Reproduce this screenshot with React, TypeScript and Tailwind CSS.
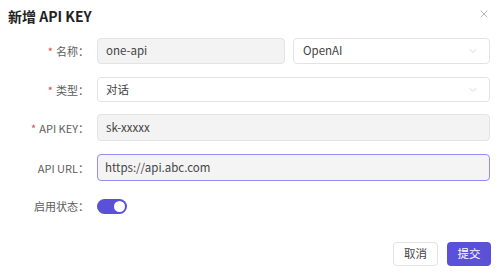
import { X, ChevronDown } from 'lucide-react';

const font = { fontFamily: '"Noto Sans CJK SC", "Noto Sans", sans-serif' };

function Label({ text, required }: { text: string; required?: boolean }) {
  return (
    <div className="w-[89px] shrink-0 text-right text-[11px] leading-[16px] text-[#5c5c5c]">
      {required && <span className="mr-[3px] text-[#e5484d]">*</span>}
      {text}：
    </div>
  );
}

export default function App() {
  return (
    <div className="relative h-[276px] w-[500px] bg-white text-[#444]" style={font}>
      <div className="flex h-[27px] items-end justify-between pl-[8px] pr-[10px]">
        <h1 className="text-[14px] font-bold leading-[22px] text-[#222]">新增 API KEY</h1>
        <X size={12} strokeWidth={1.5} className="mb-[7px] text-[#999]" />
      </div>

      <div className="mt-[11px] flex flex-col pr-[10px]">
        <div className="flex items-center">
          <Label text="名称" required />
          <div className="ml-[8px] flex h-[26px] w-[188px] items-center rounded-[4px] border border-[#e3e3e3] bg-[#f3f3f3] px-[8px] text-[11.5px]">
            one-api
          </div>
          <div className="ml-[8px] flex h-[26px] flex-1 items-center justify-between rounded-[4px] border border-[#e3e3e3] bg-white pl-[9px] pr-[10px] text-[11.5px]">
            OpenAI
            <ChevronDown size={12} strokeWidth={1.2} className="text-[#bbb]" />
          </div>
        </div>

        <div className="mt-[13px] flex items-center">
          <Label text="类型" required />
          <div className="ml-[8px] flex h-[25px] flex-1 items-center justify-between rounded-[4px] border border-[#e3e3e3] bg-white pl-[8px] pr-[10px] text-[11.5px]">
            对话
            <ChevronDown size={12} strokeWidth={1.2} className="text-[#bbb]" />
          </div>
        </div>

        <div className="mt-[12px] flex items-center">
          <Label text="API KEY" required />
          <div className="ml-[8px] flex h-[27px] flex-1 items-center rounded-[4px] border border-[#e3e3e3] bg-[#f3f3f3] px-[8px] text-[11.5px]">
            sk-xxxxx
          </div>
        </div>

        <div className="mt-[13px] flex items-center">
          <Label text="API URL" />
          <div className="ml-[8px] flex h-[27px] flex-1 items-center rounded-[4px] border border-[#978df0] bg-[#f4f4f4] px-[7px] text-[11.5px]">
            https://api.abc.com
          </div>
        </div>

        <div className="mt-[17px] flex items-center">
          <Label text="启用状态" />
          <div className="ml-[8px] flex h-[15px] w-[30px] items-center justify-end rounded-full bg-[#5b50d8] pr-[2px]">
            <div className="h-[11px] w-[11px] rounded-full bg-white" />
          </div>
        </div>
      </div>

      <div className="mt-[28px] flex justify-end gap-[9px] pr-[9px]">
        <button className="h-[24px] w-[45px] rounded-[4px] border border-[#e3e3e3] bg-white text-[11.5px] text-[#444]">
          取消
        </button>
        <button className="h-[24px] w-[44px] rounded-[4px] bg-[#5b50d8] text-[11.5px] text-white">
          提交
        </button>
      </div>
    </div>
  );
}
